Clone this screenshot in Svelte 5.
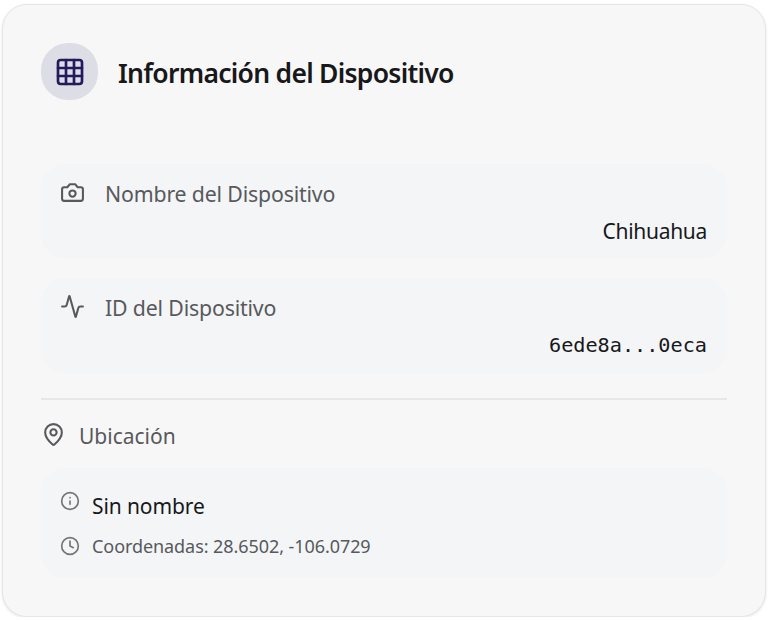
<script>
  const rows = [
    { icon: 'camera', label: 'Nombre del Dispositivo', value: 'Chihuahua', mono: false },
    { icon: 'activity', label: 'ID del Dispositivo', value: '6ede8a...0eca', mono: true }
  ];
</script>

<section class="card">
  <header>
    <span class="badge">
      <svg width="32" height="32" viewBox="0 0 24 24"><rect x="3" y="3" width="18" height="18" rx="2" /><path d="M3 9h18M3 15h18M9 3v18M15 3v18" /></svg>
    </span>
    <h2>Información del Dispositivo</h2>
  </header>

  <div class="rows">
    {#each rows as row}
      <div class="row">
        <div class="label">
          <svg width="25" height="25" viewBox="0 0 24 24">
            {#if row.icon === 'camera'}
              <path d="M14.5 4h-5L7 7H4a2 2 0 0 0-2 2v9a2 2 0 0 0 2 2h16a2 2 0 0 0 2-2V9a2 2 0 0 0-2-2h-3l-2.500-3z" /><circle cx="12" cy="13" r="3" />
            {:else}
              <path d="M22 12h-2.480a2 2 0 0 0-1.930 1.460l-2.350 8.360a.25.25 0 0 1-.48 0L9.240 2.180a.25.25 0 0 0-.48 0l-2.350 8.360A2 2 0 0 1 4.490 12H2" />
            {/if}
          </svg>
          <span>{row.label}</span>
        </div>
        <div class="value" class:mono={row.mono}>{row.value}</div>
      </div>
    {/each}
  </div>

  <div class="location">
    <div class="heading">
      <svg width="25" height="25" viewBox="0 0 24 24"><path d="M20 10c0 4.993-5.539 10.193-7.399 11.799a1 1 0 0 1-1.202 0C9.539 20.193 4 14.993 4 10a8 8 0 0 1 16 0" /><circle cx="12" cy="10" r="3" /></svg>
      <span>Ubicación</span>
    </div>
    <div class="place">
      <div class="name">
        <svg width="20" height="20" viewBox="0 0 24 24"><circle cx="12" cy="12" r="10" /><path d="M12 16v-4M12 8h.01" /></svg>
        <span>Sin nombre</span>
      </div>
      <div class="coords">
        <svg width="20" height="20" viewBox="0 0 24 24"><circle cx="12" cy="12" r="10" /><path d="M12 6v6l4 2" /></svg>
        <span>Coordenadas: 28.6502, -106.0729</span>
      </div>
    </div>
  </div>
</section>

<style>
  :global(body) { background: #fff; }
  .card {
    box-sizing: border-box; width: 764px; height: 613px; margin: 4px 0 0 2px; padding: 38px;
    border: 1.500px solid #e2e7e7; border-radius: 25px; background: #f7f7f7;
    box-shadow: 0 1px 3px rgba(0, 0, 0, .1);
    font-family: "Noto Sans", "Open Sans", sans-serif; color: #18181b;
  }
  svg { display: block; flex: none; fill: none; stroke: currentColor; stroke-width: 2; stroke-linecap: round; stroke-linejoin: round; }
  span { white-space: nowrap; }
  header { display: flex; align-items: center; gap: 20px; height: 57px; }
  .badge { width: 57px; height: 57px; border-radius: 27px; background: #dddde6; color: #211b5c; display: grid; place-items: center; }
  h2 { margin: 0; padding-top: 2px; font-size: 26.500px; line-height: 36px; font-weight: 600; letter-spacing: -.73px; white-space: nowrap; }
  .rows { display: flex; flex-direction: column; gap: 19px; margin-top: 64px; }
  .row { box-sizing: border-box; height: 95px; padding: 14px 20px 0 19px; border-radius: 25px; background: #f3f5f7; }
  .label { display: flex; height: 32px; gap: 20px; color: #58595c; font-size: 21.300px; line-height: 32px; }
  .label svg { margin-top: 2px; }
  .label span { letter-spacing: -.17px; }
  .value { text-align: right; font-size: 21px; line-height: 34px; margin-top: 4px; letter-spacing: -.3px; }
  .mono { font-family: "DejaVu Sans Mono", monospace; font-size: 20.200px; letter-spacing: 0; }
  .location { margin-top: 25px; border-top: 2px solid #e4e8e8; }
  .heading { display: flex; height: 32px; margin-top: 20px; gap: 13px; color: #58595c; font-size: 21px; line-height: 33px; }
  .heading svg { margin-top: 2px; }
  .place { box-sizing: border-box; height: 110px; margin-top: 16px; padding: 22px 19px; border-radius: 25px; background: #f3f5f7; }
  .name, .coords { display: flex; gap: 12px; }
  .name { height: 32px; font-size: 21px; line-height: 32px; letter-spacing: -.1px; }
  .coords { height: 26px; margin-top: 11px; font-size: 18px; line-height: 27px; letter-spacing: -.07px; color: #58595c; }
  .name svg, .coords svg { color: #747579; margin-top: 3px; }
  .name svg { margin-top: 1px; }
</style>
